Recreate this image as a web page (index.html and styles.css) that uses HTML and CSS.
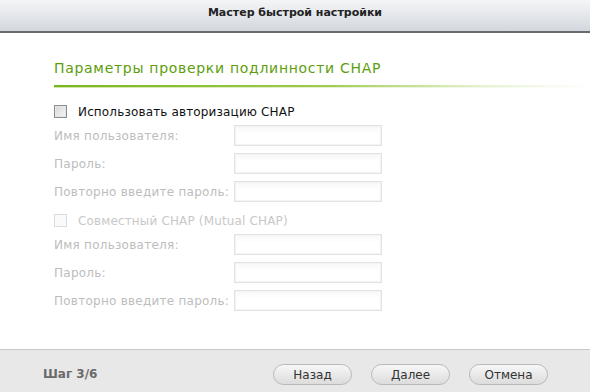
FILE: index.html
```html
<!DOCTYPE html>
<html>
<head>
	<title>Мастер быстрой настройки</title>
	<link rel="stylesheet" href="styles.css">
</head>
<body>
	<div class="wizard">
		<div class="wizard-header">Мастер быстрой настройки</div>

		<div class="wizard-body">
			<h2 class="section-title">Параметры проверки подлинности CHAP</h2>
			<div class="section-rule"></div>

			<label class="check-row">
				<span class="checkbox"></span>
				<span>Использовать авторизацию CHAP</span>
			</label>
			<div class="field-row">
				<span class="field-label">Имя пользователя:</span>
				<span class="field-input"></span>
			</div>
			<div class="field-row">
				<span class="field-label">Пароль:</span>
				<span class="field-input"></span>
			</div>
			<div class="field-row">
				<span class="field-label">Повторно введите пароль:</span>
				<span class="field-input"></span>
			</div>

			<label class="check-row mutual disabled">
				<span class="checkbox"></span>
				<span>Совместный CHAP (Mutual CHAP)</span>
			</label>
			<div class="field-row">
				<span class="field-label">Имя пользователя:</span>
				<span class="field-input"></span>
			</div>
			<div class="field-row">
				<span class="field-label">Пароль:</span>
				<span class="field-input"></span>
			</div>
			<div class="field-row">
				<span class="field-label">Повторно введите пароль:</span>
				<span class="field-input"></span>
			</div>
		</div>

		<div class="wizard-footer">
			<span class="step">Шаг 3/6</span>
			<div class="buttons">
				<button class="btn">Назад</button>
				<button class="btn">Далее</button>
				<button class="btn">Отмена</button>
			</div>
		</div>
	</div>
</body>
</html>
```

FILE: styles.css
```css
/* wizard dialog, Tahoma-like look */
body {
	margin: 0;
	font-family: "DejaVu Sans", sans-serif;
	font-size: 12px;
	background: #fff;
}

.wizard {
	height: 392px;
	display: flex;
	flex-direction: column;
}

.wizard-header {
	height: 31px;
	line-height: 25px;
	text-align: center;
	font-weight: bold;
	font-size: 11px;
	color: #222;
	background: linear-gradient(#f4f5f7, #d3d8de);
	border-bottom: 2px solid #676a6f;
}

.wizard-body {
	flex: 1;
	padding: 27px 0 0 54px;
}

.section-title {
	margin: 0;
	font-size: 14px;
	font-weight: normal;
	line-height: 17px;
	color: #5c9e0c;
	letter-spacing: 0.7px;
}

.section-rule {
	height: 2px;
	margin-top: 8px;
	margin-bottom: 17px;
	border-bottom: 1px solid;
	border-image: linear-gradient(to right, #cfe5a8, #eef5e0 70%, #fff) 1;
	background: linear-gradient(to right, #7ab51d, #9dcb4e 50%, #e6f2d2 80%, #fff);
}

.check-row {
	display: flex;
	align-items: center;
	gap: 11px;
	height: 13px;
	color: #111;
	font-size: 12px;
	letter-spacing: 0.15px;
	margin-bottom: 1px;
}

.check-row.mutual {
	margin-top: 12px;
}

.checkbox {
	width: 11px;
	height: 11px;
	border: 1px solid #8d8d8d;
	background: linear-gradient(135deg, #d8d8d8, #f6f6f6);
	box-shadow: inset 0 0 0 1px #e6e6e6;
}

.disabled {
	color: #c8c8c8;
}

.disabled .checkbox {
	border-color: #dcdcdc;
	background: #fafafa;
	box-shadow: none;
}

.field-row {
	display: flex;
	align-items: center;
	height: 21px;
	margin-top: 7px;
}

.field-label {
	width: 180px;
	color: #bdbdbd;
	letter-spacing: 0.25px;
}

.field-input {
	width: 146px;
	height: 19px;
	border: 1px solid #e3e3e3;
	background: linear-gradient(#f7f7f7, #fff 40%);
	outline: 1px solid #f3f3f3;
	outline-offset: -2px;
}

.wizard-footer {
	height: 28px;
	border-top: 1px solid #c8c8c8;
	background: #e8e8e8;
	display: flex;
	align-items: flex-start;
	padding: 14px 42px 0 43px;
}

.step {
	font-weight: bold;
	color: #6a6a6a;
	line-height: 21px;
	font-size: 12px;
}

.buttons {
	margin-left: auto;
	display: flex;
	gap: 19px;
}

.btn {
	width: 79px;
	height: 21px;
	padding: 0;
	font-family: "DejaVu Sans", sans-serif;
	font-size: 12px;
	color: #333;
	border: 1px solid #b9b9b9;
	border-radius: 11px;
	background: linear-gradient(#f7f7f7, #dcdcdc);
	cursor: pointer;
}
```
